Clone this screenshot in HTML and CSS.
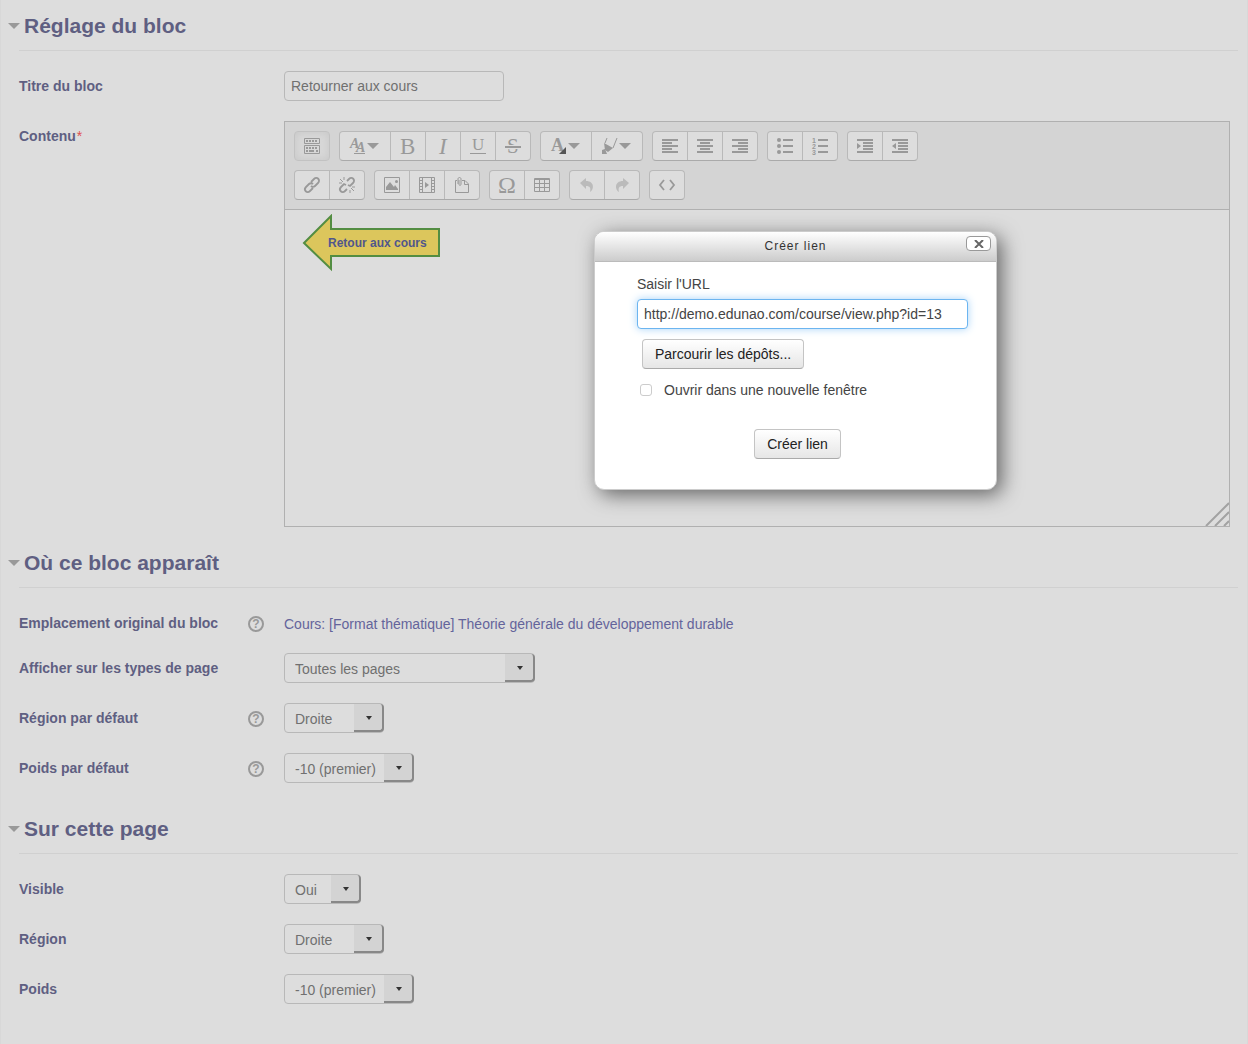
FILE: index.html
```html
<!DOCTYPE html>
<html lang="fr">
<head>
    <meta charset="UTF-8">
    <meta name="viewport" content="width=device-width, initial-scale=1.0">
    <title>Réglage du bloc</title>
    <link rel="stylesheet" href="styles.css">
</head>
<body>
<form class="page">
    <section>
        <h3><a href="#reglage">Réglage du bloc</a></h3>
        <div class="row">
            <div class="label"><label for="titre">Titre du bloc</label></div>
            <div class="field"><input type="text" id="titre" class="text" value="Retourner aux cours"></div>
        </div>
        <div class="row row-editor">
            <div class="label"><span>Contenu<span class="required">*</span></span></div>
            <div class="field">
                <div class="editor">
                    <div class="toolbar">
                        <div class="toolbar-row">
                            <div class="group active">
                                <button type="button" aria-label="Afficher plus de boutons"><svg width="16" height="16"><path fill="none" stroke="currentColor" d="M.5.5h15v5H.5zM.5 7.5h15v8H.5z"/><path stroke="currentColor" stroke-width="2" stroke-dasharray="2 1" d="M2 3h12M2 10h12"/><path stroke="currentColor" stroke-width="2" d="M2 13h2M5 13h5M12 13h2"/></svg></button>
                            </div>
                            <div class="group">
                                <button type="button" class="wide" aria-label="Styles"><svg width="30" height="24"><text class="serif slant bold" x="0" y="14" font-size="14">A</text><text class="serif slant bold" x="6" y="18" font-size="14">A</text><path d="M4 19h11v1H4zM17 9h12l-6 6z"/></svg></button>
                                <button type="button" aria-label="Gras"><svg width="16" height="28"><text class="serif" x="0" y="22" font-size="23">B</text></svg></button>
                                <button type="button" aria-label="Italique"><svg width="16" height="28"><text class="serif slant" x="4" y="22" font-size="23">I</text></svg></button>
                                <button type="button" aria-label="Souligné"><svg width="16" height="28"><text class="serif" x="2" y="18" font-size="17">U</text><path d="M0 21h16v1H0z"/></svg></button>
                                <button type="button" aria-label="Barré"><svg width="16" height="28"><text class="serif" x="2" y="21" font-size="21">S</text><path class="gap" d="M0 13h16v1H0zM0 16h16v1H0z"/><path d="M0 14h16v2H0z"/></svg></button>
                            </div>
                            <div class="group">
                                <button type="button" class="wide" aria-label="Couleur du texte"><svg width="30" height="24"><text class="serif bold" x="0" y="17" font-size="18">A</text><path class="dark" d="M15 13v7H8z"/><path d="M17 9h12l-6 6z"/></svg></button>
                                <button type="button" class="wide" aria-label="Surligner"><svg width="30" height="24"><path fill="none" stroke="currentColor" d="M5 4L3 9M15 4l-4 10"/><path d="M2 9l9 5-5 4-3-2z"/><path d="M0 16l3-1 2 5H0z"/><path d="M17 9h12l-6 6z"/></svg></button>
                            </div>
                            <div class="group">
                                <button type="button" aria-label="Aligner à gauche"><svg width="16" height="16"><path d="M0 1h16v2H0zM0 4h10v2H0zM0 7h16v2H0zM0 10h10v2H0zM0 13h16v2H0z"/></svg></button>
                                <button type="button" aria-label="Centrer"><svg width="16" height="16"><path d="M0 1h16v2H0zM3 4h10v2H3zM0 7h16v2H0zM3 10h10v2H3zM0 13h16v2H0z"/></svg></button>
                                <button type="button" aria-label="Aligner à droite"><svg width="16" height="16"><path d="M0 1h16v2H0zM6 4h10v2H6zM0 7h16v2H0zM6 10h10v2H6zM0 13h16v2H0z"/></svg></button>
                            </div>
                            <div class="group">
                                <button type="button" aria-label="Liste à puces"><svg width="16" height="16"><circle cx="2" cy="2" r="2"/><circle cx="2" cy="8" r="2"/><circle cx="2" cy="14" r="2"/><path d="M6 1h10v2H6zM6 7h10v2H6zM6 13h10v2H6z"/></svg></button>
                                <button type="button" aria-label="Liste numérotée"><svg width="16" height="24"><text class="digit" x="0" y="9">1</text><text class="digit" x="0" y="15">2</text><text class="digit" x="0" y="21">3</text><path d="M6 5h10v2H6zM6 11h10v2H6zM6 17h10v2H6z"/></svg></button>
                            </div>
                            <div class="group">
                                <button type="button" aria-label="Augmenter le retrait"><svg width="16" height="16"><path d="M0 1h16v2H0zM6 4h10v2H6zM6 7h10v2H6zM6 10h10v2H6zM0 13h16v2H0zM0 5l4 3-4 3z"/></svg></button>
                                <button type="button" aria-label="Diminuer le retrait"><svg width="16" height="16"><path d="M0 1h16v2H0zM6 4h10v2H6zM6 7h10v2H6zM6 10h10v2H6zM0 13h16v2H0zM4 5L0 8l4 3z"/></svg></button>
                            </div>
                        </div>
                        <div class="toolbar-row">
                            <div class="group">
                                <button type="button" aria-label="Lien"><svg width="16" height="16" fill="none" stroke="currentColor" stroke-width="1.8"><path d="M7 5l3-3c3-3 7 1 4 4l-3 3c-1 1-3 1-4 0M9 11l-3 3c-3 3-7-1-4-4l3-3c1-1 3-1 4 0"/></svg></button>
                                <button type="button" aria-label="Supprimer le lien"><svg width="16" height="16" fill="none" stroke="currentColor"><path stroke-width="1.8" d="M8 4l2-2c3-3 7 1 4 4l-3 3-2-1M8 12l-2 2c-3 3-7-1-4-4l3-3 2 1"/><path d="M5 0v3M1 2l3 3M0 6h3M11 13v3M12 11l3 3M13 10h3"/></svg></button>
                            </div>
                            <div class="group">
                                <button type="button" aria-label="Image"><svg width="16" height="16"><path fill="none" stroke="currentColor" d="M.5.5h15v15H.5z"/><path d="M2 13v-3l4-5 4 5 1-2 3 4v1z"/><circle cx="12.5" cy="4.5" r="1.5"/></svg></button>
                                <button type="button" aria-label="Média"><svg width="16" height="16"><path fill="none" stroke="currentColor" d="M.5.5h15v15H.5zM3.5 0v16M12.500 0v16"/><path fill="none" stroke="currentColor" stroke-width="3" stroke-dasharray="1 2" d="M2 3v12M14 3v12"/><path d="M6 5l4 3-4 3z"/></svg></button>
                                <button type="button" aria-label="Gérer les fichiers"><svg width="16" height="16" fill="none" stroke="currentColor"><path d="M3 3.500H1.500v12h13V7L11 3.500H8M10.500 3.500v4h4"/><path d="M4 7V2c0-2 3-2 3 0v5c0 2-2 2-2 0V3"/></svg></button>
                            </div>
                            <div class="group">
                                <button type="button" aria-label="Caractère spécial"><svg width="18" height="28"><text class="serif" x="0" y="22" font-size="24">Ω</text></svg></button>
                                <button type="button" aria-label="Tableau"><svg width="16" height="16" fill="none" stroke="currentColor"><path d="M.5 1.500h15v13H.5zM0 2.500h16M0 6.500h16M0 10.500h16M5.500 2v13M10.500 2v13"/></svg></button>
                            </div>
                            <div class="group">
                                <button type="button" disabled aria-label="Annuler"><svg width="16" height="16"><path d="M1 6l6-5v3c9 0 8 9 4 11 1-4 0-6-4-6v3z"/></svg></button>
                                <button type="button" disabled aria-label="Rétablir"><svg width="16" height="16"><path d="M15 6L9 1v3C0 4 1 13 5 15 4 11 5 9 9 9v3z"/></svg></button>
                            </div>
                            <div class="group">
                                <button type="button" aria-label="HTML"><svg width="16" height="16" fill="none" stroke="currentColor" stroke-width="1.8"><path d="M5 3L1 8l4 5M11 3l4 5-4 5"/></svg></button>
                            </div>
                        </div>
                    </div>
                    <div class="content">
                        <a href="#cours"><svg width="139" height="58"><path class="arrow" d="M3 29L30 2v13h108v27H30v13z"/><text class="arrow-text" x="27" y="33">Retour aux cours</text></svg></a>
                        <svg class="resize" width="24" height="24"><path d="M1 24L24 1M10 24l14-14M19 24l5-5"/></svg>
                    </div>
                </div>
            </div>
        </div>
    </section>

    <section>
        <h3><a href="#apparait">Où ce bloc apparaît</a></h3>
        <div class="row">
            <div class="label"><span>Emplacement original du bloc</span>
                <button type="button" class="help" aria-label="Aide">?</button></div>
            <div class="field static"><a href="#theorie">Cours: [Format thématique] Théorie générale du développement durable</a></div>
        </div>
        <div class="row">
            <div class="label"><label for="types">Afficher sur les types de page</label></div>
            <div class="field"><span class="select large"><select id="types"><option>Toutes les pages</option></select></span></div>
        </div>
        <div class="row">
            <div class="label"><label for="region-defaut">Région par défaut</label>
                <button type="button" class="help" aria-label="Aide">?</button></div>
            <div class="field"><span class="select small"><select id="region-defaut"><option>Droite</option><option>Gauche</option></select></span></div>
        </div>
        <div class="row">
            <div class="label"><label for="poids-defaut">Poids par défaut</label>
                <button type="button" class="help" aria-label="Aide">?</button></div>
            <div class="field"><span class="select medium"><select id="poids-defaut"><option>-10 (premier)</option></select></span></div>
        </div>
    </section>

    <section>
        <h3><a href="#page">Sur cette page</a></h3>
        <div class="row">
            <div class="label"><label for="visible">Visible</label></div>
            <div class="field"><span class="select tiny"><select id="visible"><option>Oui</option><option>Non</option></select></span></div>
        </div>
        <div class="row">
            <div class="label"><label for="region">Région</label></div>
            <div class="field"><span class="select small"><select id="region"><option>Droite</option><option>Gauche</option></select></span></div>
        </div>
        <div class="row">
            <div class="label"><label for="poids">Poids</label></div>
            <div class="field"><span class="select medium"><select id="poids"><option>-10 (premier)</option></select></span></div>
        </div>
    </section>
</form>

<div class="dialog" role="dialog" aria-labelledby="dialog-title">
    <div class="dialog-header">
        <span id="dialog-title">Créer lien</span>
        <button type="button" class="close" aria-label="Fermer"><svg width="10" height="8"><path d="M1 0l8 8M9 0L1 8"/></svg></button>
    </div>
    <form class="dialog-body">
        <label for="url">Saisir l'URL</label>
        <input type="text" id="url" class="text url" value="http://demo.edunao.com/course/view.php?id=13">
        <button type="button" class="btn browse">Parcourir les dépôts...</button>
        <div class="check">
            <input type="checkbox" id="fenetre">
            <label for="fenetre">Ouvrir dans une nouvelle fenêtre</label>
        </div>
        <div class="submit"><button type="button" class="btn">Créer lien</button></div>
    </form>
</div>
</body>
</html>
```
FILE: styles.css
```css
* {
    box-sizing: border-box;
}

body {
    margin: 0;
    min-height: 100vh;
    background-color: #ddd;
    border-left: 1px solid #d8d8d8;
    border-right: 1px solid #d8d8d8;
    font-family: "Liberation Sans", Arial, sans-serif;
    font-size: 14px;
    line-height: 20px;
    color: #444;
}

a {
    color: #64649b;
    text-decoration: none;
}

button, input, select {
    font-family: inherit;
    font-size: 14px;
    line-height: 20px;
}

svg {
    display: block;
}

.page {
    padding: 0 9px 0 18px;
}

h3 {
    margin: 0 0 20px;
    padding: 6px 0 4px;
    border-bottom: 1px solid #d0d0d0;
    font-size: 21px;
    line-height: 40px;
}

h3 a {
    display: flex;
    align-items: center;
    gap: 4px;
    margin-left: -11px;
    color: #5f5f82;
}

h3 a::before {
    content: "";
    border: 6px solid transparent;
    border-top-color: #999;
    border-bottom: 0;
}

/* form rows */
.row {
    display: grid;
    grid-template-columns: 265px 1fr;
    padding-right: 8px;
    margin-bottom: 20px;
}

.row-editor {
    margin-bottom: 10px;
}

.label {
    display: flex;
    justify-content: space-between;
    align-items: flex-start;
    padding: 5px 20px 0 0;
    font-weight: bold;
    color: #5f5f82;
}

.required {
    color: #e05050;
    font-weight: normal;
    padding-left: 1px;
}

.static {
    padding-top: 6px;
    margin-bottom: -1px;
}

.help {
    width: 16px;
    height: 16px;
    margin-top: 3px;
    padding: 0;
    border: 2px solid #999;
    border-radius: 50%;
    background: none;
    color: #999;
    font-size: 12px;
    font-weight: bold;
    line-height: 12px;
}

.text {
    display: block;
    width: 220px;
    height: 30px;
    padding: 4px 6px;
    border: 1px solid #b8b8b8;
    border-radius: 4px;
    background-color: #ddd;
    color: #707070;
}

.select {
    position: relative;
    display: block;
    height: 30px;
}

.select select {
    appearance: none;
    width: 100%;
    height: 30px;
    padding: 1px 30px 0 10px;
    border: 1px solid #b8b8b8;
    border-radius: 4px;
    background-color: #ddd;
    color: #707070;
}

.select::after {
    content: "";
    position: absolute;
    top: 1px;
    right: 0;
    bottom: 1px;
    width: 28px;
    border: solid #888;
    border-width: 0 2px 2px 0;
    border-radius: 0 4px 4px 0;
    background-color: #d3d3d3;
    pointer-events: none;
}

.select::before {
    content: "";
    position: absolute;
    z-index: 1;
    top: 13px;
    right: 12px;
    border: 3px solid transparent;
    border-top: 4px solid #333;
    border-bottom: 0;
    pointer-events: none;
}

.large { width: 251px; }
.medium { width: 130px; }
.small { width: 100px; }
.tiny { width: 77px; }

/* editor */
.editor {
    border: 1px solid #b0b0b0;
}

.toolbar {
    display: flex;
    flex-direction: column;
    gap: 9px;
    padding: 9px;
    border-bottom: 1px solid #b0b0b0;
    background-color: #d4d4d4;
}

.toolbar-row {
    display: flex;
    gap: 9px;
}

.group {
    display: flex;
    height: 30px;
    border: 1px solid #b9b9b9;
    border-bottom-color: #aaa;
    border-radius: 4px;
    background-color: #ddd;
}

.group button {
    display: flex;
    align-items: center;
    justify-content: center;
    width: 34px;
    padding: 0;
    border: 0;
    background: none;
    color: #999;
    fill: currentColor;
}

.group button + button {
    width: 35px;
    border-left: 1px solid #b9b9b9;
}

.group .wide {
    width: 50px;
}

.group .wide + .wide {
    width: 51px;
}

.group button:disabled {
    color: #bbb;
}

.group.active {
    border-color: #c2c2c2;
    background-color: #d8d8d8;
    box-shadow: inset 0 0 8px #c6c6c6;
}

.group svg {
    overflow: visible;
}

.serif {
    font-family: "Liberation Serif", "Times New Roman", serif;
}

.slant {
    font-style: italic;
}

.bold {
    font-weight: bold;
}

.digit {
    font-size: 7px;
    font-weight: bold;
}

.dark {
    fill: #555;
}

.gap {
    fill: #ddd;
}

.content {
    position: relative;
    min-height: 316px;
    padding: 4px 16px;
}

.content a {
    display: inline-block;
}

.arrow {
    fill: #dcc65c;
    stroke: #538d42;
    stroke-width: 2;
}

.arrow-text {
    font-size: 12px;
    font-weight: bold;
    fill: #50568c;
}

.resize {
    position: absolute;
    right: 0;
    bottom: 0;
    stroke: #a2a2a2;
    stroke-width: 2;
}

/* link dialog */
.dialog {
    position: absolute;
    top: 231px;
    left: 594px;
    width: 403px;
    border: 1px solid #ccc;
    border-radius: 10px;
    background-color: #fff;
    box-shadow: 5px 5px 20px #666;
}

.dialog-header {
    position: relative;
    padding: 4px 0 5px;
    border-bottom: 1px solid #bbb;
    border-radius: 9px 9px 0 0;
    background: linear-gradient(#fff, #ccc);
    color: #333;
    font-size: 12px;
    letter-spacing: 1px;
    text-align: center;
}

.close {
    position: absolute;
    top: 4px;
    right: 5px;
    display: flex;
    align-items: center;
    justify-content: center;
    width: 25px;
    height: 15px;
    padding: 0;
    border: 1px solid #999;
    border-radius: 4px;
    background-color: #fff;
    stroke: #666;
    stroke-width: 2;
}

.dialog-body {
    padding: 12px 28px 30px 42px;
}

.dialog-body label {
    display: block;
}

.url {
    width: 100%;
    margin: 5px 0 10px;
    border-color: #6cb5f0;
    background-color: #fff;
    color: #444;
    box-shadow: 0 0 8px #a8d4f8;
}

.btn {
    height: 30px;
    padding: 4px 12px;
    border: 1px solid #c4c4c4;
    border-bottom-color: #aaa;
    border-radius: 4px;
    background: linear-gradient(#fff, #e6e6e6);
    color: #222;
}

.browse {
    display: block;
    margin-left: 5px;
}

.check {
    display: flex;
    align-items: center;
    gap: 12px;
    padding: 11px 0 29px 3px;
}

.check input {
    appearance: none;
    width: 12px;
    height: 12px;
    margin: 0;
    border: 1px solid #ccc;
    border-radius: 3px;
    background-color: #fff;
}

.submit {
    padding-right: 10px;
    text-align: center;
}

.submit .btn {
    display: inline-block;
    vertical-align: top;
}
```
